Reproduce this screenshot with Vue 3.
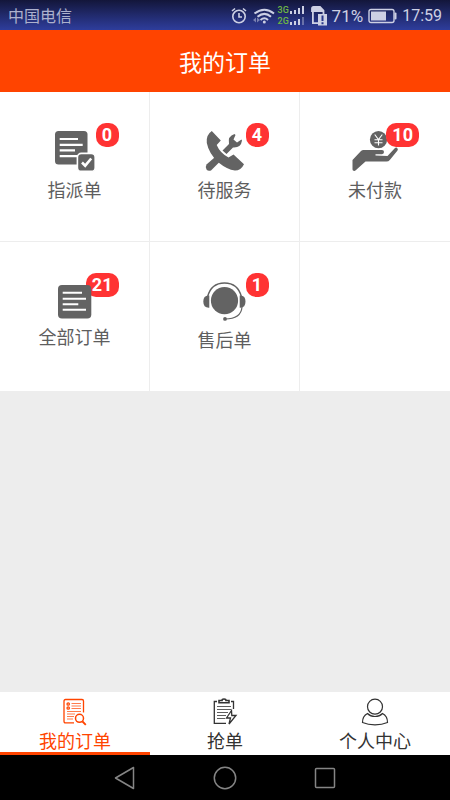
<script setup>
import { ref } from 'vue'

const orders = [
  { id: 'assigned', label: '指派单', count: 0 },
  { id: 'pending', label: '待服务', count: 4 },
  { id: 'unpaid', label: '未付款', count: 10 },
  { id: 'all', label: '全部订单', count: 21 },
  { id: 'after', label: '售后单', count: 1 }
]
const tabs = [
  { id: 'orders', label: '我的订单' },
  { id: 'grab', label: '抢单' },
  { id: 'me', label: '个人中心' }
]
const active = ref('orders')
</script>

<template>
  <div class="page">
    <div class="status">
      <span class="carrier">中国电信</span>
      <div class="indicators">
        <svg class="alarm" width="16" height="18" viewBox="0 0 16 18" fill="none" stroke="currentColor" stroke-width="1.6">
          <circle cx="8" cy="9.500" r="6.200" />
          <path d="M8 6v4h3M1 4l3-2.500M15 4l-3-2.500" />
        </svg>
        <svg class="wifi" width="22" height="18" viewBox="0 0 22 18" fill="none" stroke="currentColor" stroke-width="2">
          <path d="M1.500 6.500Q11.500-1 21 6.500M4.500 9.800Q11.500 4 18 9.800M7.500 13Q11.500 9.600 15 13" />
          <circle cx="11.300" cy="15" r="1.500" fill="currentColor" stroke="none" />
          <path d="M0 13l3-2.500v5zM4 10.500v5l3-2.500z" fill="currentColor" stroke="none" opacity=".5" />
        </svg>
        <div class="networks">
          <div class="network">
            <span>3G</span>
            <svg width="15" height="8" viewBox="0 0 15 8" fill="currentColor"><path d="M0 5h2v3H0zM4 4h2v4H4zM8 2h2v6H8zM12 0h2v8h-2z" /></svg>
          </div>
          <div class="network">
            <span>2G</span>
            <svg width="15" height="8" viewBox="0 0 15 8" fill="currentColor"><path d="M0 5h2v3H0zM4 4h2v4H4zM8 2h2v6H8z" /><path d="M12 0h2v8h-2z" opacity=".4" /></svg>
          </div>
        </div>
        <svg class="sim" width="17" height="20" viewBox="0 0 17 20">
          <path d="M8 17.100H1.900V5.500M1 6V2.500Q1 1 2.500 1H9l3.500 3.500V8" fill="none" stroke="currentColor" stroke-width="1.800" />
          <path d="M1 1h8l3.500 3.500v1.500H1z" fill="currentColor" />
          <rect x="7" y="8" width="9" height="11.500" fill="currentColor" />
          <path d="M10.500 9.500h2V15h-2zM10.500 16.200h2v2h-2z" fill="#29368a" />
        </svg>
        <span class="percent">71%</span>
        <svg class="battery" width="29" height="16" viewBox="0 0 29 16">
          <rect x="1" y="1.500" width="25" height="13" rx="2" fill="none" stroke="currentColor" stroke-width="1.400" />
          <rect x="3" y="3.500" width="15" height="9" fill="currentColor" />
          <rect x="26.500" y="4.500" width="2" height="7" rx="1" fill="currentColor" />
        </svg>
        <time class="clock">17:59</time>
      </div>
    </div>

    <header class="header"><h1>我的订单</h1></header>

    <main class="main">
      <div class="grid">
        <a v-for="o in orders" :key="o.id" class="cell" href="#">
          <span class="picture" :class="o.id">
            <svg v-if="o.id === 'assigned'" width="50" height="44" viewBox="0 0 50 44">
              <rect x="5" y="3" width="32.500" height="33.500" rx="3.500" fill="currentColor" />
              <path d="M9.700 11H28M9.700 16.800h23M9.700 22.400H25M9.700 28.100h18" stroke="#fff" stroke-width="2.200" />
              <rect x="27.400" y="25.400" width="17.800" height="18" rx="4" fill="currentColor" stroke="#fff" stroke-width="1.600" />
              <path d="M32 34.500l3.200 3.200 6-7.200" fill="none" stroke="#fff" stroke-width="2.600" />
            </svg>
            <svg v-else-if="o.id === 'pending'" width="50" height="44" viewBox="0 0 50 44" fill="currentColor">
              <path d="M11.800 3L20.800 12.500 16.700 17Q20 25 28.500 29.500L33.500 26.500 44 36.200Q41 42.500 35 42.500 27 41.500 18.500 34.500 9 26 6.800 15 5.800 7 11.800 3z" />
              <path d="M22.500 22.500L29 16Q27.500 8 34.500 6L35.500 7 33.500 11.500 37 14.500 41.500 11.500 42 12.500Q41 20 33 19.500L26.500 26z" />
              <path d="M6.500 36.500L14.500 29.500 19.500 34 11 42.500Q8 43.500 6.500 41.500 5 39 6.500 36.500z" />
            </svg>
            <svg v-else-if="o.id === 'unpaid'" width="50" height="44" viewBox="0 0 50 44" fill="currentColor">
              <circle cx="28.500" cy="11.700" r="8.600" />
              <path d="M24.700 6.500l3.800 5 3.800-5M24.500 11.800h8M24.500 14.800h8M28.500 11.500v6" fill="none" stroke="#fff" stroke-width="1.100" />
              <path d="M2.500 32L11 23Q12 22 13.500 22H32Q34 22 34 24T32 26.200H25.500L25.500 27.500 37.500 28 45 20Q46.500 19 47.500 20.500 48.200 21.200 47.500 22.500L39.800 32Q38.500 33.500 36.500 33.500H15.500L6 42Q4.500 43.500 3 42.500 2.500 42 2.500 41z" />
            </svg>
            <svg v-else-if="o.id === 'all'" width="50" height="41" viewBox="0 0 50 41">
              <rect x="8" y="7" width="33.300" height="33.500" rx="4" fill="currentColor" />
              <path d="M12.700 14.700H32M12.700 20.800H36M12.700 26.200h15.600M12.700 31.700H36" stroke="#fff" stroke-width="2" />
            </svg>
            <svg v-else width="50" height="44" viewBox="0 0 50 44" fill="currentColor">
              <circle cx="24.500" cy="22.700" r="13.600" />
              <path d="M7.500 19Q11 5 24.500 5T41.500 19" fill="none" stroke="currentColor" stroke-width="1.500" />
              <path d="M9.300 17.500v12.200Q3.300 30 3.300 23.500T9.300 17.500zM39.700 17.500v12.200Q45.500 30 45.500 23.500T39.700 17.500z" />
              <path d="M42 29Q41 41 25 41" fill="none" stroke="currentColor" stroke-width="1.200" />
              <circle cx="25" cy="40.900" r="1.900" />
            </svg>
            <span class="badge">{{ o.count }}</span>
          </span>
          <span class="label">{{ o.label }}</span>
        </a>
        <div class="cell"></div>
      </div>
    </main>

    <nav class="tabs">
      <button v-for="t in tabs" :key="t.id" type="button" class="tab" :class="{ active: active === t.id }" @click="active = t.id">
        <svg v-if="t.id === 'orders'" width="28" height="28" viewBox="0 0 28 28" fill="none" stroke="currentColor" stroke-width="1.300">
          <path d="M13 24.800H4.500q-1.500 0-1.500-1.500V3q0-1.500 1.500-1.500h16.500q1.500 0 1.500 1.500V14.500" />
          <circle cx="7.200" cy="6" r="1.200" /><circle cx="7.200" cy="10" r="1.200" />
          <path d="M10.500 5.500h9.500M10.500 8h9.500M10.500 10.500h9.500M6 13.500h14M6 16h8M6 18.500h7M6 21h6" stroke-width=".7" />
          <circle cx="18.500" cy="20.300" r="4" stroke-width="1.500" />
          <path d="M21.500 23.500l3.300 3.300" stroke-width="1.800" />
        </svg>
        <svg v-else-if="t.id === 'grab'" width="28" height="28" viewBox="0 0 28 28" fill="none" stroke="currentColor" stroke-width="1.300">
          <path d="M6 3.500H3.300V25.300H15M20 3.500h2.500V11" />
          <path d="M8 4.800V2.500h3q0-1.500 2-1.500t2 1.500h3V4.800z" stroke-width="1.600" />
          <path d="M6 8.500h14M6 11.500h14M6 14.500h11M6 17.500h9M6 20.500h8" stroke-width=".8" />
          <path d="M20.500 12.500l-5 7.500h4l-1.500 6 7-8.500h-4.200z" />
        </svg>
        <svg v-else width="28" height="28" viewBox="0 0 28 28" fill="none" stroke="currentColor" stroke-width="1.200">
          <circle cx="14" cy="8.700" r="7.500" />
          <path d="M6.500 15.500Q1.500 18 1.500 24.500 7 26.800 14 26.800T26.500 24.500Q26.500 18 21.500 15.500 18.500 18.500 14 18.500T6.500 15.500z" />
        </svg>
        <span>{{ t.label }}</span>
      </button>
    </nav>

    <div class="system">
      <button type="button" aria-label="返回"><svg width="24" height="24" viewBox="0 0 24 24"><path d="M2.500 12L20.500 1.500v21z" /></svg></button>
      <button type="button" aria-label="主页"><svg width="24" height="24" viewBox="0 0 24 24"><circle cx="12" cy="12" r="10.700" /></svg></button>
      <button type="button" aria-label="最近任务"><svg width="24" height="24" viewBox="0 0 24 24"><rect x="2.500" y="2.500" width="19" height="19" rx="1" /></svg></button>
    </div>
  </div>
</template>

<style>
body {
  background: #ededed;
}
</style>

<style scoped>
.page {
  display: flex;
  flex-direction: column;
  min-height: 100vh;
  font-family: Roboto, "Noto Sans CJK SC", sans-serif;
  color: #5e5e5e;
  background: #ededed;
}
.status {
  display: flex;
  justify-content: space-between;
  align-items: center;
  height: 30px;
  padding: 0 8px;
  color: #cdd0e4;
  background: linear-gradient(#13163a, #212a6c 50%, #2e3d9c);
  font-size: 16px;
  line-height: 24px;
}
.carrier {
  padding-top: 4px;
  color: #adb1cd;
}
.indicators {
  display: flex;
  align-items: center;
  padding-top: 1px;
}
.wifi {
  margin-left: 6px;
}
.networks {
  display: flex;
  flex-direction: column;
  margin: 0 6px 0 3px;
}
.network {
  display: flex;
  align-items: center;
  height: 11px;
}
.network span {
  width: 12px;
  color: #6fb644;
  font-size: 9px;
  font-weight: 500;
  line-height: 11px;
}
.percent {
  margin: 0 5px 0 4px;
  font-size: 17px;
}
.clock {
  margin-left: 5px;
}
.header {
  box-sizing: border-box;
  display: flex;
  align-items: center;
  justify-content: center;
  height: 62px;
  padding-top: 5px;
  background: #ff4400;
}
h1 {
  margin: 0;
  color: #fff;
  font-size: 23px;
  font-weight: 400;
  line-height: 32px;
}
.main {
  flex: 1;
}
.grid {
  display: grid;
  grid-template-columns: repeat(3, 1fr);
}
.cell {
  box-sizing: border-box;
  display: flex;
  flex-direction: column;
  align-items: center;
  gap: 7px;
  height: 150px;
  padding-top: 36px;
  border-right: 1px solid #ededed;
  border-bottom: 1px solid #ededed;
  background: #fff;
  color: inherit;
  text-decoration: none;
}
.cell:nth-child(3n) {
  border-right: 0;
}
.picture {
  position: relative;
  display: flex;
  color: #636363;
}
.picture svg {
  position: relative;
}
.all svg {
  z-index: 1;
}
.badge {
  position: absolute;
  top: -5px;
  right: -19px;
  box-sizing: border-box;
  min-width: 23px;
  padding: 0 6px;
  border-radius: 10px;
  background: #ff3333;
  color: #fff;
  font-size: 18px;
  font-weight: 700;
  line-height: 24px;
  text-align: center;
}
.label {
  font-size: 18px;
  line-height: 24px;
}
.tabs {
  display: grid;
  grid-template-columns: repeat(3, 1fr);
  background: #fff;
}
.tab {
  display: flex;
  flex-direction: column;
  align-items: center;
  gap: 4px;
  height: 63px;
  padding: 6px 0 0;
  border: 0;
  border-bottom: 3px solid transparent;
  background: none;
  color: #333;
  font-family: inherit;
  font-size: 18px;
  line-height: 24px;
}
.tab svg {
  flex: none;
}
.active {
  border-color: #ff4400;
  color: #ff4400;
}
.system {
  display: flex;
  align-items: center;
  justify-content: center;
  gap: 76px;
  height: 45px;
  background: #000;
}
.system button {
  display: flex;
  padding: 0;
  border: 0;
  background: none;
}
.system svg {
  fill: none;
  stroke: #858585;
  stroke-width: 1.5;
  stroke-linejoin: round;
}
</style>
